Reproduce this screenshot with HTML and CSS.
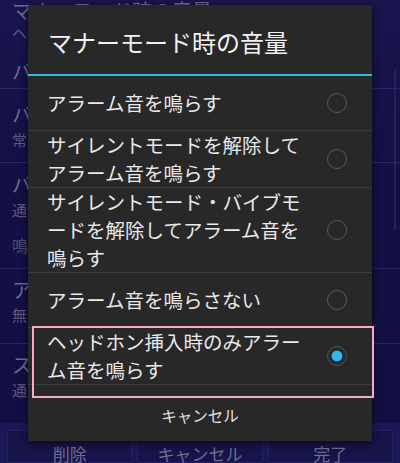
FILE: index.html
```html
<!DOCTYPE html>
<html lang="ja">

<head>
    <meta charset="UTF-8">
    <meta name="viewport" content="width=device-width, initial-scale=1.0">
    <title>マナーモード時の音量</title>
    <link rel="stylesheet" href="styles.css">
</head>

<body>
    <div class="screen">
        <!-- settings list behind the dialog -->
        <div class="settings">
            <div class="pref pref-first">
                <div class="pref-title">マナーモード時の音量</div>
                <div class="pref-summary">ヘッドホン挿入時のみアラーム音を鳴らす</div>
            </div>
            <div class="pref pref-single">
                <div class="pref-title">バイブレーション</div>
            </div>
            <div class="pref pref-a">
                <div class="pref-title">バイブレーションの種類</div>
                <div class="pref-summary">常にバイブレーション</div>
            </div>
            <div class="pref pref-b">
                <div class="pref-title">バイブレーションの強さ</div>
                <div class="pref-summary">通常</div>
            </div>
            <div class="pref-header">鳴動設定</div>
            <div class="pref pref-c">
                <div class="pref-title">アラーム音</div>
                <div class="pref-summary">無音</div>
            </div>
            <div class="pref pref-d">
                <div class="pref-title">スヌーズ</div>
                <div class="pref-summary">通常</div>
            </div>
        </div>

        <div class="scrollbar"></div>

        <div class="buttons">
            <div class="btn">削除</div>
            <div class="btn">キャンセル</div>
            <div class="btn">完了</div>
        </div>

        <!-- choice dialog -->
        <div class="dialog">
            <div class="dialog-title">マナーモード時の音量</div>
            <div class="choices">
                <div class="choice">
                    <div class="choice-text">アラーム音を鳴らす</div>
                    <span class="radio"></span>
                </div>
                <div class="choice">
                    <div class="choice-text">サイレントモードを解除してアラーム音を鳴らす</div>
                    <span class="radio"></span>
                </div>
                <div class="choice">
                    <div class="choice-text">サイレントモード・バイブモードを解除してアラーム音を鳴らす</div>
                    <span class="radio"></span>
                </div>
                <div class="choice">
                    <div class="choice-text">アラーム音を鳴らさない</div>
                    <span class="radio"></span>
                </div>
                <div class="choice">
                    <div class="choice-text">ヘッドホン挿入時のみアラーム音を鳴らす</div>
                    <span class="radio checked"></span>
                </div>
            </div>
            <div class="dialog-cancel">キャンセル</div>
            <div class="highlight"></div>
        </div>
    </div>
</body>

</html>
```

FILE: styles.css
```css
body {
    margin: 0;
    font-family: "Noto Sans CJK JP", "Noto Sans", sans-serif;
    background: #141147;
}

.screen {
    position: relative;
    width: 400px;
    height: 463px;
    overflow: hidden;
    background: linear-gradient(180deg, #19154e, #131046 40%, #120f45);
}

/* background settings list */
.settings {
    display: flex;
    flex-direction: column;
}

.pref {
    display: flex;
    flex-direction: column;
    gap: 3px;
    padding-left: 12px;
    box-sizing: border-box;
    border-bottom: 1px solid #2a2763;
}

.pref-title {
    font-size: 20px;
    line-height: 22px;
    color: #6f6d90;
    white-space: nowrap;
}

.pref-summary {
    font-size: 15px;
    line-height: 22px;
    color: #5d5b80;
    white-space: nowrap;
}

.pref-first {
    height: 50px;
    gap: 0;
    border-bottom: none;
}

.pref-single {
    height: 39px;
    padding-top: 11px;
}

.pref-a {
    height: 74px;
    padding-top: 15px;
}

.pref-b {
    height: 68px;
    padding-top: 11px;
    border-bottom: none;
}

.pref-header {
    height: 38px;
    box-sizing: border-box;
    padding: 3px 0 0 12px;
    font-size: 16px;
    line-height: 22px;
    color: #4f4d72;
    border-bottom: 1px solid #2a2763;
}

.pref-c {
    height: 75px;
    padding-top: 10px;
}

.pref-d {
    height: 79px;
    padding-top: 10px;
    border-bottom: none;
}

.scrollbar {
    position: absolute;
    top: 70px;
    right: 4px;
    width: 2px;
    height: 160px;
    background: #25225c;
}

.buttons {
    display: flex;
    gap: 5px;
    padding: 7px 7px 0;
    height: 40px;
    box-sizing: border-box;
    background: #1b1955;
}

.btn {
    flex: 1;
    background: #161449;
    border: 1px solid #232063;
    text-align: center;
    font-size: 17px;
    line-height: 46px;
    color: #6f6d90;
}

/* dialog */
.dialog {
    position: absolute;
    top: 5px;
    left: 28px;
    width: 344px;
    height: 436px;
    background: #282828;
    border-radius: 2px;
    box-shadow: 0 2px 8px rgba(0, 0, 0, 0.6);
}

.dialog-title {
    height: 71px;
    box-sizing: border-box;
    padding: 20px 0 0 20px;
    font-size: 24px;
    line-height: 34px;
    color: #f2f2f2;
    border-bottom: 2px solid #33b5e5;
}

.choice {
    display: flex;
    align-items: center;
    min-height: 54px;
    padding: 0 25px 0 19px;
    border-bottom: 1px solid #3b3b3b;
}

.choice-text {
    width: 266px;
    font-size: 19.5px;
    line-height: 28px;
    color: #e9e9e9;
    line-break: anywhere;
}

.radio {
    margin-left: auto;
    width: 20px;
    height: 20px;
    box-sizing: border-box;
    border: 1.5px solid #5a5a5a;
    border-radius: 50%;
}

.radio.checked {
    border-color: #4e5357;
    background: radial-gradient(circle, #3db8e8 0, #33b5e5 5px, #1c2a31 5.8px, #26343b 100%);
}

.dialog-cancel {
    height: 55px;
    box-sizing: border-box;
    padding-top: 6px;
    text-align: center;
    font-size: 15.5px;
    line-height: 48px;
    color: #e2e2e2;
}

.highlight {
    position: absolute;
    top: 321px;
    left: 4px;
    width: 342px;
    height: 72px;
    box-sizing: border-box;
    border: 2px solid #f9a9c8;
}
```
